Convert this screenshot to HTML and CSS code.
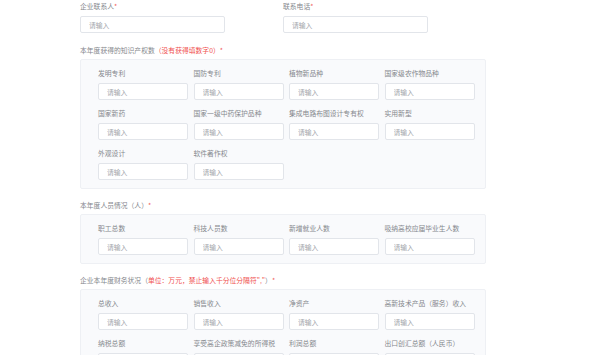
FILE: index.html
```html
<!DOCTYPE html>
<html lang="zh-CN">
<head>
    <meta charset="UTF-8">
    <title>企业信息填报</title>
    <link rel="stylesheet" href="styles.css">
</head>
<body>
    <div class="form">
        <div class="top-row">
            <div class="field wide">
                <label>企业联系人<span class="req">*</span></label>
                <input type="text" placeholder="请输入">
            </div>
            <div class="field wide">
                <label>联系电话<span class="req">*</span></label>
                <input type="text" placeholder="请输入">
            </div>
        </div>

        <div class="section-title">本年度获得的知识产权数<span class="note">（没有获得填数字0）</span><span class="req">*</span></div>
        <div class="panel">
            <div class="field"><label>发明专利</label><input type="text" placeholder="请输入"></div>
            <div class="field"><label>国防专利</label><input type="text" placeholder="请输入"></div>
            <div class="field"><label>植物新品种</label><input type="text" placeholder="请输入"></div>
            <div class="field"><label>国家级农作物品种</label><input type="text" placeholder="请输入"></div>
            <div class="field"><label>国家新药</label><input type="text" placeholder="请输入"></div>
            <div class="field"><label>国家一级中药保护品种</label><input type="text" placeholder="请输入"></div>
            <div class="field"><label>集成电路布图设计专有权</label><input type="text" placeholder="请输入"></div>
            <div class="field"><label>实用新型</label><input type="text" placeholder="请输入"></div>
            <div class="field"><label>外观设计</label><input type="text" placeholder="请输入"></div>
            <div class="field"><label>软件著作权</label><input type="text" placeholder="请输入"></div>
        </div>

        <div class="section-title">本年度人员情况（人）<span class="req">*</span></div>
        <div class="panel">
            <div class="field"><label>职工总数</label><input type="text" placeholder="请输入"></div>
            <div class="field"><label>科技人员数</label><input type="text" placeholder="请输入"></div>
            <div class="field"><label>新增就业人数</label><input type="text" placeholder="请输入"></div>
            <div class="field"><label>吸纳高校应届毕业生人数</label><input type="text" placeholder="请输入"></div>
        </div>

        <div class="section-title">企业本年度财务状况（<span class="note">单位：万元，禁止输入千分位分隔符","</span>）<span class="req">*</span></div>
        <div class="panel">
            <div class="field"><label>总收入</label><input type="text" placeholder="请输入"></div>
            <div class="field"><label>销售收入</label><input type="text" placeholder="请输入"></div>
            <div class="field"><label>净资产</label><input type="text" placeholder="请输入"></div>
            <div class="field"><label>高新技术产品（服务）收入</label><input type="text" placeholder="请输入"></div>
            <div class="field"><label>纳税总额</label><input type="text" placeholder="请输入"></div>
            <div class="field"><label>享受高企政策减免的所得税</label><input type="text" placeholder="请输入"></div>
            <div class="field"><label>利润总额</label><input type="text" placeholder="请输入"></div>
            <div class="field"><label>出口创汇总额（人民币）</label><input type="text" placeholder="请输入"></div>
        </div>
    </div>
</body>
</html>
```

FILE: styles.css
```css
body {
    margin: 0;
    background: #fff;
    font-family: "Noto Sans CJK SC", "Noto Sans", sans-serif;
}
.form {
    width: 406px;
    padding-left: 80px;
}
.top-row {
    display: flex;
    gap: 58px;
    padding-bottom: 1px;
}
.field {
    display: flex;
    flex-direction: column;
}
.field label {
    font-size: 6.8px;
    line-height: 12px;
    height: 12px;
    margin-bottom: 4px;
    color: #85888d;
    white-space: nowrap;
}
.field input {
    box-sizing: border-box;
    width: 90px;
    height: 17px;
    margin: 0;
    padding: 0 8px;
    border: 1px solid #e2e5ea;
    border-radius: 2px;
    background: #fff;
    font-family: inherit;
    font-size: 6.8px;
    color: #606266;
    outline: none;
}
.field.wide input {
    width: 145px;
}
.field input::placeholder {
    color: #a3a6ab;
}
.req {
    color: #f0504f;
}
.note {
    color: #f0504f;
}
.section-title {
    margin-top: 10px;
    margin-bottom: 3px;
    font-size: 6.8px;
    line-height: 12px;
    color: #85888d;
    white-space: nowrap;
}
.panel {
    display: grid;
    grid-template-columns: repeat(4, 90px);
    column-gap: 5.5px;
    row-gap: 7px;
    padding: 7px 12px 8px 17px;
    background: #f9fafc;
    border: 1px solid #eef0f4;
    border-radius: 2px;
}
```
